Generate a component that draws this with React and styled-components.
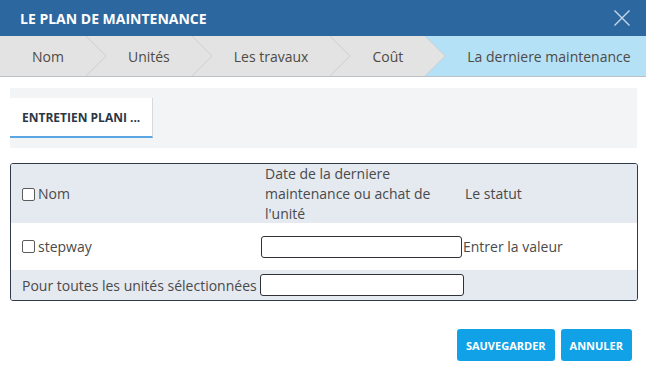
import React from "react";
import styled, { createGlobalStyle } from "styled-components";

const GlobalStyle = createGlobalStyle`
  html, body { margin: 0; padding: 0; background: #ffffff; }
  body { font-family: "Open Sans", "Liberation Sans", sans-serif; }
  * { box-sizing: border-box; }
`;

const Dialog = styled.div`
  width: 646px;
  height: 378px;
  background: #ffffff;
  display: flex;
  flex-direction: column;
`;

const Header = styled.div`
  height: 36px;
  background: #2d67a0;
  display: flex;
  align-items: center;
  justify-content: space-between;
  padding: 0 15px 0 20px;
`;

const Title = styled.h1`
  margin: 0;
  color: #ffffff;
  font-size: 14px;
  font-weight: 700;
`;

const CloseButton = styled.button`
  border: 0;
  background: transparent;
  padding: 0;
  width: 18px;
  height: 18px;
  display: flex;
  cursor: pointer;
`;

const Steps = styled.div`
  display: flex;
  height: 41px;
  background: #e3e3e3;
  border-bottom: 1px solid #bcc1c6;
`;

const Step = styled.div`
  display: flex;
  align-items: center;
  padding: 0 ${(p) => (p.$last ? "0" : "22px")} 0 ${(p) => (p.$first ? "32px" : "22px")};
  font-size: 14px;
  color: #4f4a45;
  background: ${(p) => (p.$active ? "#b5e1f6" : "transparent")};
  flex: ${(p) => (p.$active ? "1" : "0 0 auto")};
  white-space: nowrap;
`;

const Sep = styled.svg`
  flex: 0 0 auto;
  display: block;
`;

const Chevron = ({ nextActive }) => (
  <Sep width="20" height="40" viewBox="0 0 20 40">
    <rect x="0" y="0" width="20" height="40" fill={nextActive ? "#b5e1f6" : "#e3e3e3"} />
    <polygon points="0,0 20,20 0,40" fill="#e3e3e3" />
    <polyline points="0,0 20,20 0,40" fill="none" stroke="#cfcfcf" strokeWidth="1" />
  </Sep>
);

const Body = styled.div`
  padding: 11px 9px 0 10px;
`;

const TabBar = styled.div`
  height: 60px;
  background: #f3f4f6;
  padding-top: 10px;
  display: flex;
`;

const Tab = styled.div`
  height: 40px;
  background: #ffffff;
  padding: 0 12px;
  display: flex;
  align-items: center;
  border-right: 1px solid #d6dadf;
  border-bottom: 2px solid #5ba6e3;
  font-size: 12px;
  font-weight: 700;
  color: #2b3745;
`;

const Table = styled.div`
  margin-top: 15px;
  width: 628px;
  border: 1px solid #2f3b48;
  border-radius: 3px;
  overflow: hidden;
  font-size: 14px;
  color: #4a4a4a;
`;

const Row = styled.div`
  display: grid;
  grid-template-columns: 248px 204px 1fr;
  align-items: center;
  height: ${(p) => p.$h}px;
  background: ${(p) => (p.$shaded ? "#e5e9f0" : "#ffffff")};
`;

const Cell = styled.div`
  display: flex;
  align-items: center;
  padding-left: ${(p) => p.$pl || 0}px;
  line-height: 20px;
`;

const SpanRow = styled.div`
  display: flex;
  align-items: center;
  height: 30px;
  background: #e5e9f0;
  padding-left: 11px;
  gap: 3px;
`;

const Check = styled.input.attrs({ type: "checkbox" })`
  appearance: none;
  margin: 0 3px 0 0;
  width: 13px;
  height: 13px;
  border: 1px solid #5c5c5c;
  border-radius: 2px;
  background: #ffffff;
`;

const TextInput = styled.input.attrs({ type: "text" })`
  width: ${(p) => p.$w}px;
  height: 22px;
  margin-left: ${(p) => p.$ml || 0}px;
  border: 1px solid #2f3337;
  border-radius: 3px;
  background: #ffffff;
  padding: 0 4px;
  font: inherit;
`;

const Footer = styled.div`
  margin-top: 28px;
  display: flex;
  justify-content: flex-end;
  gap: 6px;
  padding-right: 5px;
`;

const Button = styled.button`
  height: 32px;
  padding: 0 9px;
  border: 0;
  border-radius: 3px;
  background: #10a1e6;
  color: #ffffff;
  font-family: "Open Sans", "Liberation Sans", sans-serif;
  font-size: 11px;
  font-weight: 700;
`;

export default function App() {
  const steps = ["Nom", "Unités", "Les travaux", "Coût", "La derniere maintenance"];
  return (
    <>
      <GlobalStyle />
      <Dialog>
        <Header>
          <Title>LE PLAN DE MAINTENANCE</Title>
          <CloseButton aria-label="close">
            <svg width="18" height="18" viewBox="0 0 18 18">
              <path d="M1.5 1.5 L16.5 16.5 M16.5 1.5 L1.5 16.5" stroke="#c9d8e8" strokeWidth="1.4" fill="none" />
            </svg>
          </CloseButton>
        </Header>
        <Steps>
          {steps.map((s, i) => (
            <React.Fragment key={s}>
              <Step $first={i === 0} $last={i === steps.length - 1} $active={i === steps.length - 1}>
                {s}
              </Step>
              {i < steps.length - 1 && <Chevron nextActive={i === steps.length - 2} />}
            </React.Fragment>
          ))}
        </Steps>
        <Body>
          <TabBar>
            <Tab>ENTRETIEN PLANI ...</Tab>
          </TabBar>
          <Table>
            <Row $h={59} $shaded>
              <Cell $pl={11}>
                <Check />
                Nom
              </Cell>
              <Cell $pl={6}>Date de la derniere maintenance ou achat de l'unité</Cell>
              <Cell $pl={2}>Le statut</Cell>
            </Row>
            <Row $h={47}>
              <Cell $pl={11}>
                <Check />
                stepway
              </Cell>
              <Cell>
                <TextInput $w={201} $ml={2} />
              </Cell>
              <Cell>Entrer la valeur</Cell>
            </Row>
            <SpanRow>
              <span>Pour toutes les unités sélectionnées</span>
              <TextInput $w={204} />
            </SpanRow>
          </Table>
          <Footer>
            <Button>SAUVEGARDER</Button>
            <Button>ANNULER</Button>
          </Footer>
        </Body>
      </Dialog>
    </>
  );
}
